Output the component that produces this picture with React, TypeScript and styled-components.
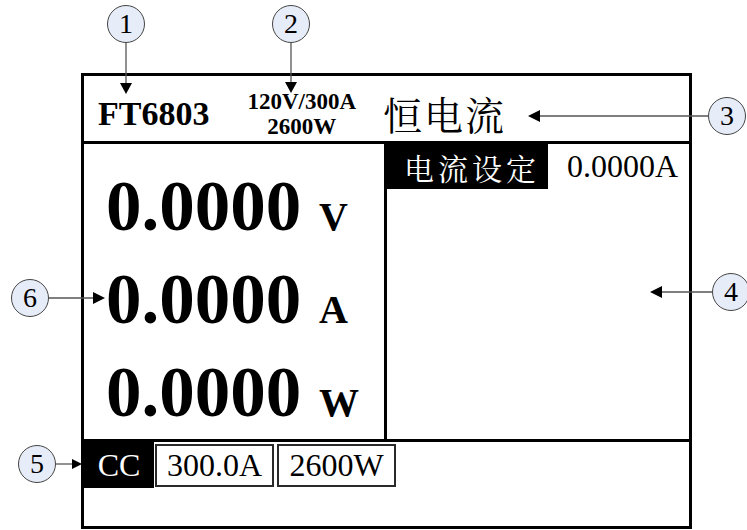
import React from "react";
import styled, { createGlobalStyle } from "styled-components";

const serif = `"Liberation Serif", "Times New Roman", serif`;
const cjk = `"Noto Serif CJK SC", "Noto Sans CJK SC", serif`;

const GlobalStyle = createGlobalStyle`
  html, body { margin: 0; padding: 0; background: #fff; }
  body {
    font-family: ${serif};
    color: #000;
  }
  * { box-sizing: border-box; }
`;

const Page = styled.div`
  position: relative;
  width: 747px;
  height: 530px;
  padding: 73px 0 0 81px;
  overflow: hidden;
`;

const Screen = styled.div`
  width: 611px;
  height: 456px;
  border: 3px solid #000;
  display: flex;
  flex-direction: column;
`;

const Header = styled.div`
  height: 68px;
  flex: none;
  border-bottom: 3px solid #000;
  display: flex;
  align-items: center;
  padding: 10px 0 0 14px;
`;

const Model = styled.div`
  font-weight: 700;
  font-size: 34px;
  line-height: 1;
`;

const Spec = styled.div`
  margin-left: 38px;
  display: flex;
  flex-direction: column;
  align-items: center;
  font-weight: 700;
  font-size: 23px;
`;

const SpecLine = styled.div`
  height: 25px;
  line-height: 25px;
  white-space: nowrap;
`;

const Mode = styled.div`
  margin-left: 27px;
  font-family: ${cjk};
  font-size: 39px;
  letter-spacing: 2px;
  line-height: 1;
`;

const Middle = styled.div`
  height: 298px;
  flex: none;
  display: flex;
  border-bottom: 3px solid #000;
`;

const Readings = styled.div`
  width: 303px;
  border-right: 3px solid #000;
  padding: 21px 0 0 22px;
  display: flex;
  flex-direction: column;
`;

const Reading = styled.div`
  font-weight: 700;
  font-size: 71px;
  line-height: 83px;
  white-space: nowrap;
`;

const Unit = styled.span`
  font-size: 40px;
`;

const Settings = styled.div`
  flex: 1;
  display: flex;
  align-items: flex-start;
`;

const SettingLabel = styled.div`
  width: 161px;
  height: 45px;
  background: #000;
  color: #fff;
  font-family: ${cjk};
  font-size: 30px;
  letter-spacing: 4px;
  display: flex;
  align-items: center;
  padding-left: 17px;
`;

const SettingValue = styled.div`
  margin-left: 19px;
  height: 45px;
  display: flex;
  align-items: center;
  font-size: 32px;
`;

const Status = styled.div`
  flex: 1;
  display: flex;
  align-items: flex-start;
`;

const StatusCell = styled.div<{ $active?: boolean; $gap?: number }>`
  height: ${(p) => (p.$active ? 46 : 43)}px;
  margin-top: ${(p) => (p.$active ? 0 : 2)}px;
  margin-left: ${(p) => p.$gap ?? 0}px;
  padding: 0 ${(p) => (p.$active ? 13 : 10)}px;
  min-width: ${(p) => (p.$active ? 70 : 119)}px;
  background: ${(p) => (p.$active ? "#000" : "#fff")};
  color: ${(p) => (p.$active ? "#fff" : "#000")};
  border: ${(p) => (p.$active ? "none" : "2px solid #2a2a2a")};
  font-size: 32px;
  display: flex;
  align-items: center;
  justify-content: center;
`;

const Badge = styled.div<{ $x: number; $y: number }>`
  position: absolute;
  left: ${(p) => p.$x - 19}px;
  top: ${(p) => p.$y - 19}px;
  width: 38px;
  height: 38px;
  border-radius: 50%;
  border: 1px solid #444;
  background: #e6ecf8;
  font-size: 28px;
  line-height: 1;
  display: flex;
  align-items: center;
  justify-content: center;
`;

const Leaders = styled.svg`
  position: absolute;
  left: 0;
  top: 0;
  pointer-events: none;
`;

type Callout = {
  n: string;
  x: number;
  y: number;
  line: [number, number, number, number];
  head: string;
};

const callouts: Callout[] = [
  { n: "1", x: 126, y: 24, line: [126, 43, 126, 84], head: "120,83 132,83 126,94" },
  { n: "2", x: 291, y: 24, line: [291, 43, 291, 83], head: "285,82 297,82 291,93" },
  { n: "3", x: 727, y: 116, line: [708, 116, 538, 116], head: "540,110 540,122 528,116" },
  { n: "4", x: 731, y: 292, line: [712, 292, 660, 292], head: "662,286 662,298 650,292" },
  { n: "5", x: 37, y: 464, line: [56, 464, 72, 464], head: "72,459 72,469 82,464" },
  { n: "6", x: 30, y: 298, line: [49, 298, 93, 298], head: "93,292 93,304 105,298" },
];

export default function App() {
  return (
    <>
      <GlobalStyle />
      <Page>
        <Screen>
          <Header>
            <Model>FT6803</Model>
            <Spec>
              <SpecLine>120V/300A</SpecLine>
              <SpecLine>2600W</SpecLine>
            </Spec>
            <Mode>恒电流</Mode>
          </Header>
          <Middle>
            <Readings>
              <Reading>
                0.0000 <Unit>V</Unit>
              </Reading>
              <Reading>
                0.0000 <Unit>A</Unit>
              </Reading>
              <Reading>
                0.0000 <Unit>W</Unit>
              </Reading>
            </Readings>
            <Settings>
              <SettingLabel>电流设定</SettingLabel>
              <SettingValue>0.0000A</SettingValue>
            </Settings>
          </Middle>
          <Status>
            <StatusCell $active>CC</StatusCell>
            <StatusCell $gap={1}>300.0A</StatusCell>
            <StatusCell $gap={3}>2600W</StatusCell>
          </Status>
        </Screen>
        <Leaders width={747} height={530} viewBox="0 0 747 530">
          {callouts.map((c) => (
            <g key={c.n}>
              <line
                x1={c.line[0]}
                y1={c.line[1]}
                x2={c.line[2]}
                y2={c.line[3]}
                stroke="#555"
                strokeWidth={1.3}
              />
              <polygon points={c.head} fill="#000" />
            </g>
          ))}
        </Leaders>
        {callouts.map((c) => (
          <Badge key={c.n} $x={c.x} $y={c.y}>
            {c.n}
          </Badge>
        ))}
      </Page>
    </>
  );
}
